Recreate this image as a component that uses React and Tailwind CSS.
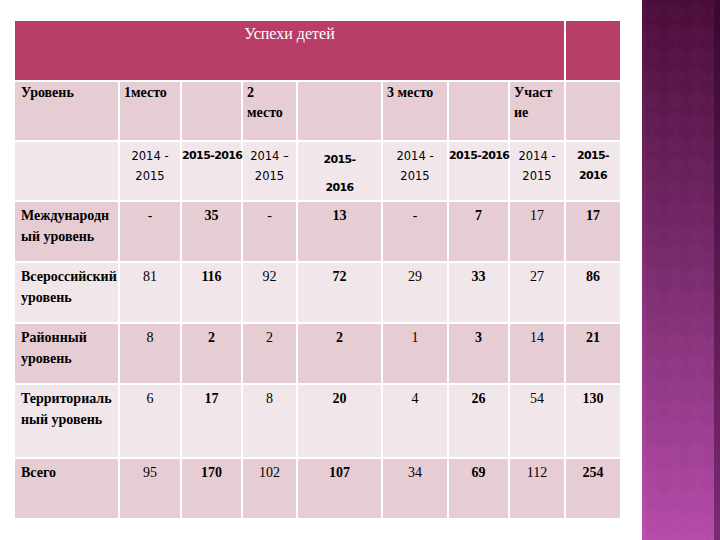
import React from "react";

const SERIF = "font-['Liberation_Serif','DejaVu_Serif',serif]";
const SANS = "font-['DejaVu_Sans',Tahoma,sans-serif]";

const DARK = "bg-[#e6cdd4]";
const LIGHT = "bg-[#f1e6ea]";

const rows = [
  { label: ["Международн", "ый уровень"], vals: ["-", "35", "-", "13", "-", "7", "17", "17"], bg: DARK },
  { label: ["Всероссийский", "уровень"], vals: ["81", "116", "92", "72", "29", "33", "27", "86"], bg: LIGHT },
  { label: ["Районный", "уровень"], vals: ["8", "2", "2", "2", "1", "3", "14", "21"], bg: DARK },
  { label: ["Территориаль", "ный уровень"], vals: ["6", "17", "8", "20", "4", "26", "54", "130"], bg: LIGHT },
  { label: ["Всего"], vals: ["95", "170", "102", "107", "34", "69", "112", "254"], bg: DARK },
];

function HeadCell({ lines }) {
  return (
    <div className={`${DARK} ${SERIF} pl-[4px] pt-[1px] text-[14px] leading-[20px] font-bold text-black`}>
      {lines.map((l, i) => (
        <div key={i} className="whitespace-nowrap">{l}</div>
      ))}
    </div>
  );
}

function YearCell({ a, b, bold, tall }) {
  return (
    <div className={`${LIGHT} ${SANS} pt-[4px] text-center text-black`}>
      <div
        className={
          bold
            ? `text-[11px] font-bold tracking-[-0.6px] whitespace-nowrap ${tall ? "leading-[28px]" : "leading-[20px]"}`
            : "text-[11.5px] leading-[20px] whitespace-nowrap"
        }
      >
        <div>{a}</div>
        {b && <div>{b}</div>}
      </div>
    </div>
  );
}

export default function App() {
  return (
    <div className="w-[720px] h-[540px] bg-white flex overflow-hidden">
      <div className="w-[642px] pl-[15px] pt-[21px]">
        <div className="w-[605px] grid grid-cols-[103px_60px_59px_53px_83px_64px_59px_54px_54px] grid-rows-[59px_58px_58px_59px_59px_59px_72px_59px] gap-[2px] bg-white">
          {/* Title row */}
          <div className={`col-span-8 bg-[#b83d67] ${SERIF} flex justify-center pt-[3px] text-white text-[16px] leading-[20px]`}>
            Успехи детей
          </div>
          <div className="bg-[#b83d67]" />

          {/* Header row */}
          <div className={`${DARK} ${SERIF} pl-[6px] pt-[1px] text-[14px] leading-[20px] font-bold text-black`}>
            Уровень
          </div>
          <HeadCell lines={["1место"]} />
          <div className={DARK} />
          <HeadCell lines={["2", "место"]} />
          <div className={DARK} />
          <HeadCell lines={["3 место"]} />
          <div className={DARK} />
          <HeadCell lines={["Участ", "ие"]} />
          <div className={DARK} />

          {/* Year row */}
          <div className={LIGHT} />
          <YearCell a="2014 -" b="2015" />
          <YearCell a="2015-2016" bold />
          <YearCell a="2014 –" b="2015" />
          <YearCell a="2015-" b="2016" bold tall />
          <YearCell a="2014 -" b="2015" />
          <YearCell a="2015-2016" bold />
          <YearCell a="2014 -" b="2015" />
          <YearCell a="2015-" b="2016" bold />

          {/* Data rows */}
          {rows.map((r, ri) => (
            <React.Fragment key={ri}>
              <div className={`${r.bg} ${SERIF} pl-[6px] pt-[3px] text-[14px] leading-[21px] font-bold text-black`}>
                {r.label.map((l, i) => (
                  <div key={i} className="whitespace-nowrap">{l}</div>
                ))}
              </div>
              {r.vals.map((v, vi) => (
                <div
                  key={vi}
                  className={`${r.bg} ${SERIF} pt-[3px] text-center text-[14px] leading-[21px] text-black ${vi % 2 === 1 ? "font-bold" : ""}`}
                >
                  {v}
                </div>
              ))}
            </React.Fragment>
          ))}
        </div>
      </div>

      {/* Decorative right strip */}
      <div className="relative w-[78px] h-full bg-gradient-to-b from-[#4a0c3a] via-[#7a2b6e] to-[#b54ba9]">
        <svg className="absolute inset-0 w-full h-full" xmlns="http://www.w3.org/2000/svg">
          <defs>
            <pattern id="dia" width="22" height="22" patternUnits="userSpaceOnUse">
              <polygon points="11,0 22,11 11,22 0,11" fill="#ffffff" fillOpacity="0.015" />
            </pattern>
          </defs>
          <rect width="100%" height="100%" fill="url(#dia)" />
        </svg>
        <div className="absolute left-0 top-0 h-full w-[4px] bg-gradient-to-b from-[#55103f] to-[#c050b2] opacity-80" />
        <div className="absolute right-0 top-0 h-full w-[6px] bg-gradient-to-b from-[#3a0830] to-[#7c2a74]" />
      </div>
    </div>
  );
}
